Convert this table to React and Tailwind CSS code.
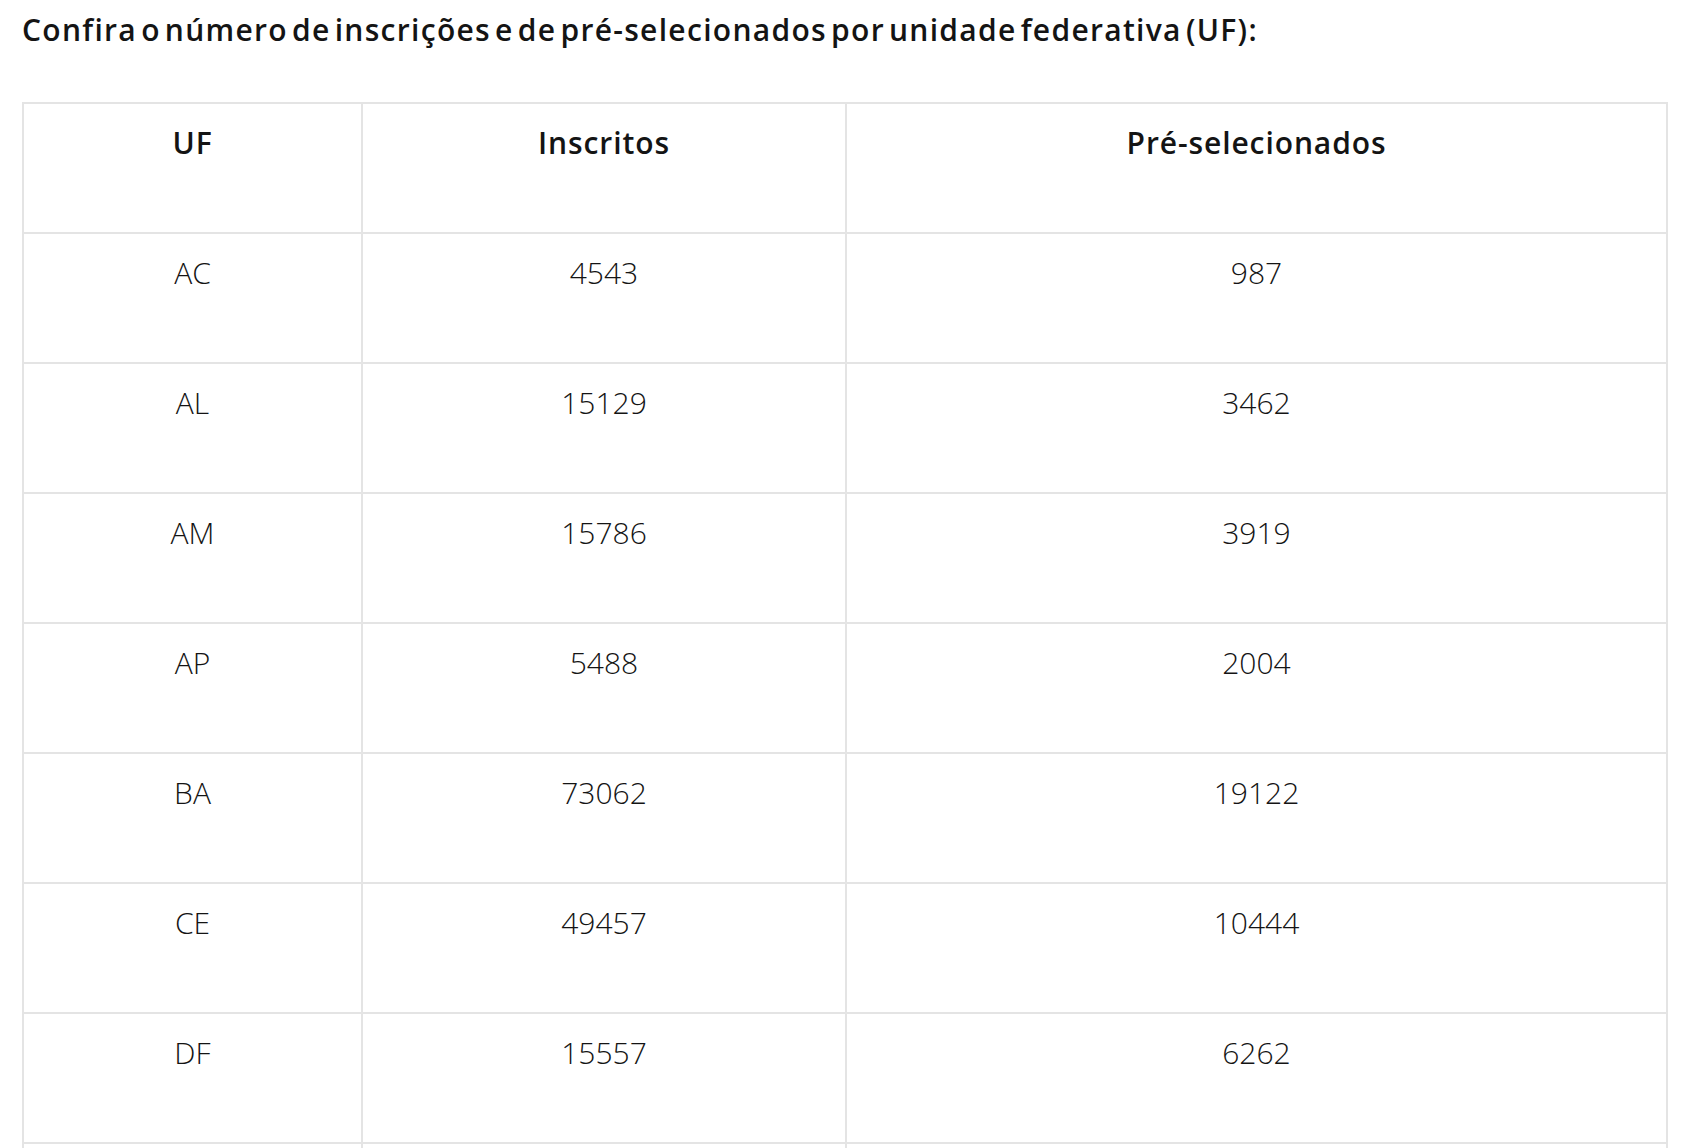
const rows = [
  ['AC', '4543', '987'],
  ['AL', '15129', '3462'],
  ['AM', '15786', '3919'],
  ['AP', '5488', '2004'],
  ['BA', '73062', '19122'],
  ['CE', '49457', '10444'],
  ['DF', '15557', '6262'],
];

export default function App() {
  return (
    <div
      className="h-[1148px] overflow-hidden bg-white text-[#141414]"
      style={{ fontFamily: '"Open Sans", "Liberation Sans", sans-serif' }}
    >
      <div className="pl-[22px] pr-[22px] pt-[10px]">
        <h3 className="text-[30px] font-semibold leading-[40px] tracking-[1.3px] [word-spacing:-5px]">
          Confira o número de inscrições e de pré-selecionados por unidade federativa (UF):
        </h3>

        <table className="mt-[52px] w-[1646px] border-collapse text-center text-[30px]">
          <colgroup>
            <col className="w-[339px]" />
            <col className="w-[484px]" />
            <col />
          </colgroup>
          <thead>
            <tr className="h-[130px]">
              <th className="border-2 border-[#e4e4e4] pt-[18px] align-top font-semibold leading-[42px] tracking-[0.9px]">UF</th>
              <th className="border-2 border-[#e4e4e4] pt-[18px] align-top font-semibold leading-[42px] tracking-[0.9px]">Inscritos</th>
              <th className="border-2 border-[#e4e4e4] pt-[18px] align-top font-semibold leading-[42px] tracking-[0.9px]">Pré-selecionados</th>
            </tr>
          </thead>
          <tbody>
            {rows.map((r) => (
              <tr key={r[0]} className="h-[130px]">
                {r.map((c, i) => (
                  <td key={i} className="border-2 border-[#e4e4e4] pt-[18px] align-top font-light leading-[42px]">
                    {c}
                  </td>
                ))}
              </tr>
            ))}
            {/* next row, cut off by the bottom of the page */}
            <tr className="h-[130px]">
              <td className="border-2 border-[#e4e4e4]"></td>
              <td className="border-2 border-[#e4e4e4]"></td>
              <td className="border-2 border-[#e4e4e4]"></td>
            </tr>
          </tbody>
        </table>
      </div>
    </div>
  );
}
